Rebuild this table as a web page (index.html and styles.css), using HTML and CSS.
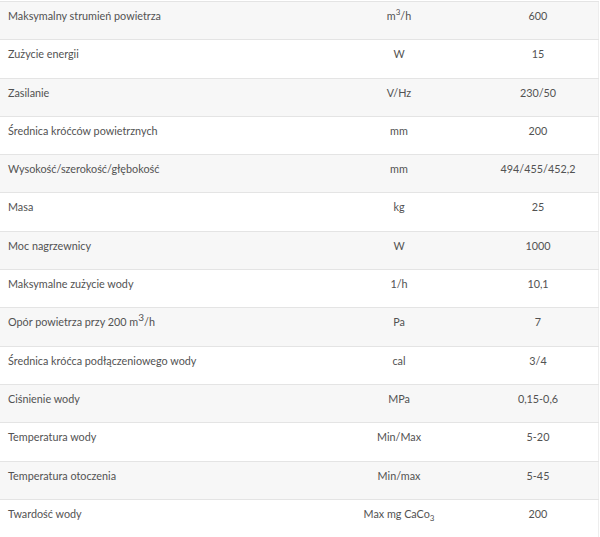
FILE: index.html
```html
<!DOCTYPE html>
<html lang="pl">

<head>
    <meta charset="UTF-8">
    <meta name="viewport" content="width=device-width, initial-scale=1.0">
    <title>Dane techniczne</title>
    <link rel="stylesheet" href="styles.css">
</head>

<body>
    <table class="spec-table">
        <tbody>
            <tr>
                <td class="name">Maksymalny strumień powietrza</td>
                <td class="unit">m<sup>3</sup>/h</td>
                <td class="value">600</td>
            </tr>
            <tr>
                <td class="name">Zużycie energii</td>
                <td class="unit">W</td>
                <td class="value">15</td>
            </tr>
            <tr>
                <td class="name">Zasilanie</td>
                <td class="unit">V/Hz</td>
                <td class="value">230/50</td>
            </tr>
            <tr>
                <td class="name">Średnica króćców powietrznych</td>
                <td class="unit">mm</td>
                <td class="value">200</td>
            </tr>
            <tr>
                <td class="name">Wysokość/szerokość/głębokość</td>
                <td class="unit">mm</td>
                <td class="value">494/455/452,2</td>
            </tr>
            <tr>
                <td class="name">Masa</td>
                <td class="unit">kg</td>
                <td class="value">25</td>
            </tr>
            <tr>
                <td class="name">Moc nagrzewnicy</td>
                <td class="unit">W</td>
                <td class="value">1000</td>
            </tr>
            <tr>
                <td class="name">Maksymalne zużycie wody</td>
                <td class="unit">1/h</td>
                <td class="value">10,1</td>
            </tr>
            <tr>
                <td class="name">Opór powietrza przy 200 m<sup class="big">3</sup>/h</td>
                <td class="unit">Pa</td>
                <td class="value">7</td>
            </tr>
            <tr>
                <td class="name">Średnica króćca podłączeniowego wody</td>
                <td class="unit">cal</td>
                <td class="value">3/4</td>
            </tr>
            <tr>
                <td class="name">Ciśnienie wody</td>
                <td class="unit">MPa</td>
                <td class="value">0,15-0,6</td>
            </tr>
            <tr>
                <td class="name">Temperatura wody</td>
                <td class="unit">Min/Max</td>
                <td class="value">5-20</td>
            </tr>
            <tr>
                <td class="name">Temperatura otoczenia</td>
                <td class="unit">Min/max</td>
                <td class="value">5-45</td>
            </tr>
            <tr>
                <td class="name">Twardość wody</td>
                <td class="unit">Max mg CaCo<sub>3</sub></td>
                <td class="value">200</td>
            </tr>
        </tbody>
    </table>
</body>

</html>
```

FILE: styles.css
```css
body {
    margin: 0;
    padding-top: 1px;
    background-color: #fff;
    font-family: Lato, "Open Sans", sans-serif;
    font-size: 10.8px;
    color: #525252;
}

.spec-table {
    width: 599px;
    border-collapse: collapse;
    border-right: 1px solid #ededed;
}

.spec-table tr {
    height: 38.3px;
    border-top: 1px solid #e4e4e4;
}

.spec-table tr:nth-child(odd) {
    background-color: #f7f7f7;
}

.spec-table td {
    padding: 6px 8px 0;
    line-height: 15px;
    vertical-align: top;
}

.name {
    width: 304px;
}

.unit {
    width: 142px;
    text-align: center;
}

.value {
    text-align: center;
}

sup,
sub {
    font-size: 8px;
    line-height: 0;
}

sup.big {
    font-size: 10px;
}
```
